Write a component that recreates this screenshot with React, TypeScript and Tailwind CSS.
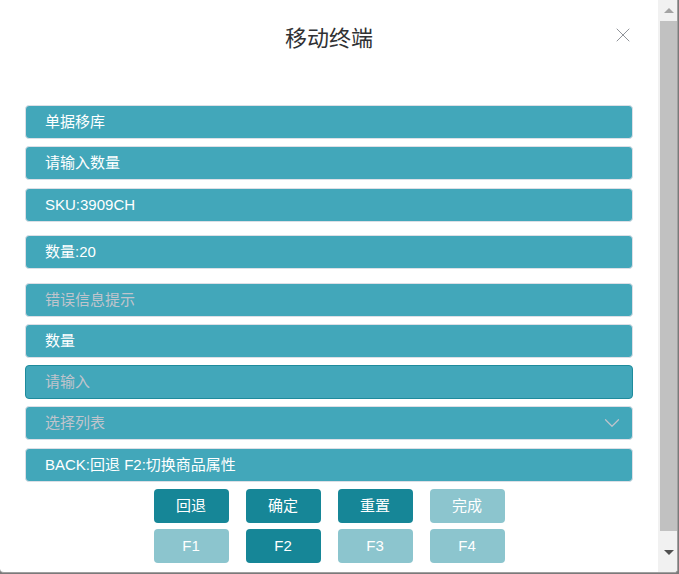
import { X, ChevronDown } from 'lucide-react';

const font = { fontFamily: '"Liberation Sans", "Noto Sans CJK SC", sans-serif' };

type Row = { text: string; mt: string; kind?: 'label' | 'placeholder' | 'input' | 'select' };

const rows: Row[] = [
  { text: '单据移库', mt: 'mt-0' },
  { text: '请输入数量', mt: 'mt-[7px]' },
  { text: 'SKU:3909CH', mt: 'mt-[8px]' },
  { text: '数量:20', mt: 'mt-[13px]' },
  { text: '错误信息提示', mt: 'mt-[14px]', kind: 'placeholder' },
  { text: '数量', mt: 'mt-[7px]' },
  { text: '请输入', mt: 'mt-[7px]', kind: 'input' },
  { text: '选择列表', mt: 'mt-[7px]', kind: 'select' },
  { text: 'BACK:回退 F2:切换商品属性', mt: 'mt-[8px]' },
];

const btnRow1 = [
  { label: '回退', on: true },
  { label: '确定', on: true },
  { label: '重置', on: true },
  { label: '完成', on: false },
];
const btnRow2 = [
  { label: 'F1', on: false },
  { label: 'F2', on: true },
  { label: 'F3', on: false },
  { label: 'F4', on: false },
];

function FieldRow({ row }: { row: Row }) {
  const isInput = row.kind === 'input';
  const muted = row.kind === 'placeholder' || row.kind === 'input' || row.kind === 'select';
  return (
    <div
      className={`${row.mt} h-[34px] rounded-[4px] border ${isInput ? 'border-[#1f8b9c]' : 'border-[#dcdfe6]'} bg-[#42a7ba] flex items-center justify-between pl-[19px] pr-[7px] text-[15px] ${muted ? 'text-[#c0c4cc]' : 'text-white'}`}
    >
      <span>{row.text}</span>
      {row.kind === 'select' && <ChevronDown size={26} strokeWidth={1.1} className="text-[#c0c4cc]" />}
    </div>
  );
}

function Btn({ label, on }: { label: string; on: boolean }) {
  return (
    <button
      className={`w-[75px] h-[34px] rounded-[4px] text-[15px] text-white flex items-center justify-center ${on ? 'bg-[#168697]' : 'bg-[#8cc5ce]'}`}
    >
      {label}
    </button>
  );
}

export default function App() {
  return (
    <div className="w-[679px] h-[574px] bg-[#7a7a7a] overflow-hidden" style={font}>
      <div className="w-[678px] h-[573px] bg-white rounded-b-[4px] border-r border-b border-[#a0a0a0] flex overflow-hidden">
        <div className="flex-1 flex flex-col">
          <div className="relative h-[105px] flex justify-center pt-[24px]">
            <h1 className="text-[22px] leading-[30px] text-[#303133]">移动终端</h1>
            <button className="absolute right-[23px] top-[23px] text-[#909399]">
              <X size={24} strokeWidth={1} />
            </button>
          </div>
          <div className="px-[25px] flex flex-col">
            {rows.map((r) => (
              <FieldRow key={r.text} row={r} />
            ))}
          </div>
          <div className="mt-[7px] flex flex-col items-center gap-[6px]">
            <div className="flex gap-[17px]">
              {btnRow1.map((b) => (
                <Btn key={b.label} {...b} />
              ))}
            </div>
            <div className="flex gap-[17px]">
              {btnRow2.map((b) => (
                <Btn key={b.label} {...b} />
              ))}
            </div>
          </div>
        </div>
        <div className="w-[19px] bg-[#f1f1f1] flex flex-col items-end">
          <div className="h-[21px] w-full flex items-center justify-center pl-[2px]">
            <div className="w-0 h-0 border-l-[5px] border-r-[5px] border-b-[5px] border-l-transparent border-r-transparent border-b-[#a3a3a3]" />
          </div>
          <div className="w-[17px] h-[510px] bg-[#c1c1c1]" />
          <div className="flex-1 w-full flex items-center justify-center pl-[2px] pt-[2px]">
            <div className="w-0 h-0 border-l-[5px] border-r-[5px] border-t-[5px] border-l-transparent border-r-transparent border-t-[#505050]" />
          </div>
        </div>
      </div>
    </div>
  );
}
